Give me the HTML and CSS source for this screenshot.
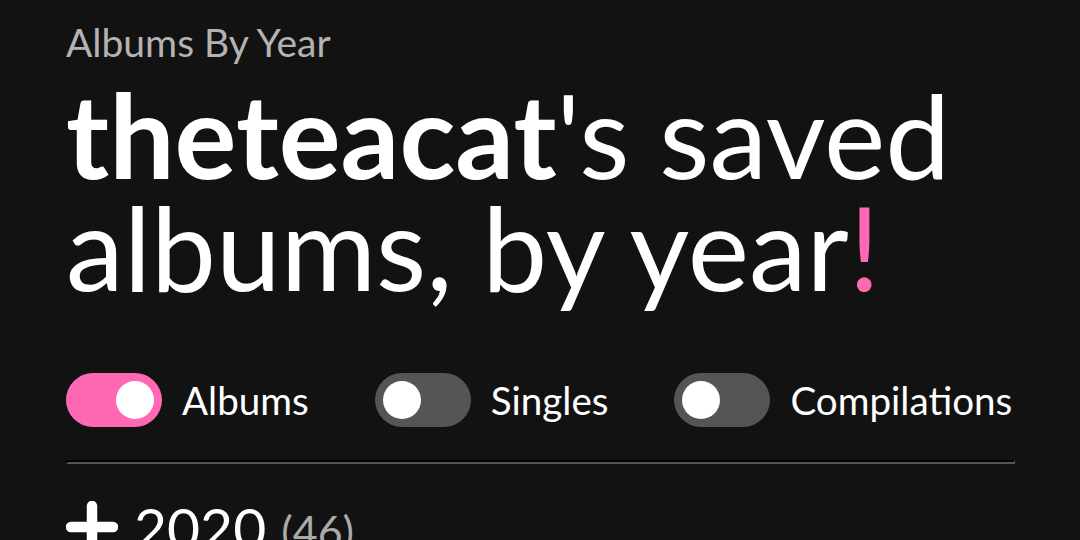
FILE: index.html
```html
<!DOCTYPE html>
<html lang="en">

<head>
  <meta charset="UTF-8">
  <meta name="viewport" content="width=device-width, initial-scale=1.0">
  <title>Albums By Year</title>
  <link rel="stylesheet" href="styles.css">
</head>

<body>
  <main class="page">
    <p class="kicker">Albums By Year</p>
    <h1 class="title"><b>theteacat</b>'s saved albums, by year<span class="bang">!</span></h1>

    <div class="filters">
      <label class="filter">
        <span class="switch on"><span class="knob"></span></span>
        <span class="filter-name">Albums</span>
      </label>
      <label class="filter">
        <span class="switch"><span class="knob"></span></span>
        <span class="filter-name">Singles</span>
      </label>
      <label class="filter">
        <span class="switch"><span class="knob"></span></span>
        <span class="filter-name">Compilations</span>
      </label>
    </div>

    <hr class="divider">

    <section class="year">
      <h2 class="year-head">
        <svg class="plus" width="52" height="52" viewBox="0 0 52 52">
          <path d="M26 5v42M5 26h42" stroke="#fff" stroke-width="10.5" stroke-linecap="round" fill="none"/>
        </svg>
        <span>2020</span>
        <span class="count">(46)</span>
      </h2>
    </section>
  </main>
</body>

</html>
```

FILE: styles.css
```css
body {
  margin: 0;
  background: #121212;
  color: #fff;
  font-family: Lato, "Open Sans", sans-serif;
}

.page {
  width: 949px;
  padding: 18px 0 0 66px;
}

.kicker {
  margin: 0;
  font-size: 39px;
  line-height: 48px;
  color: #b3b3b3;
}

.title {
  margin: 13px 0 0;
  font-size: 116px;
  line-height: 112px;
  font-weight: 400;
}

.title b {
  font-weight: 700;
}

.bang {
  color: #ff69b4;
}

.filters {
  display: flex;
  align-items: center;
  gap: 66px;
  margin-top: 70px;
}

.filter {
  display: flex;
  align-items: center;
  gap: 20px;
  font-size: 38.6px;
}

.switch {
  display: flex;
  align-items: center;
  width: 96px;
  height: 54px;
  padding: 0 8px;
  box-sizing: border-box;
  border-radius: 27px;
  background: #555;
}

.switch.on {
  background: #ff69b4;
  justify-content: flex-end;
}

.knob {
  width: 38px;
  height: 38px;
  border-radius: 50%;
  background: #fff;
}

.divider {
  margin: 33px 0 0;
  height: 0;
  border-style: solid;
  border-width: 2px;
  border-color: #000 #555 #555 #000;
}

.year-head {
  display: flex;
  align-items: center;
  gap: 16px;
  height: 70px;
  margin: 28px 0 0;
  font-size: 57px;
  line-height: 70px;
  font-weight: 400;
}

.count {
  margin-left: -1px;
  font-size: 43px;
  line-height: 70px;
  padding-top: 8px;
  color: #aaa;
}
```
